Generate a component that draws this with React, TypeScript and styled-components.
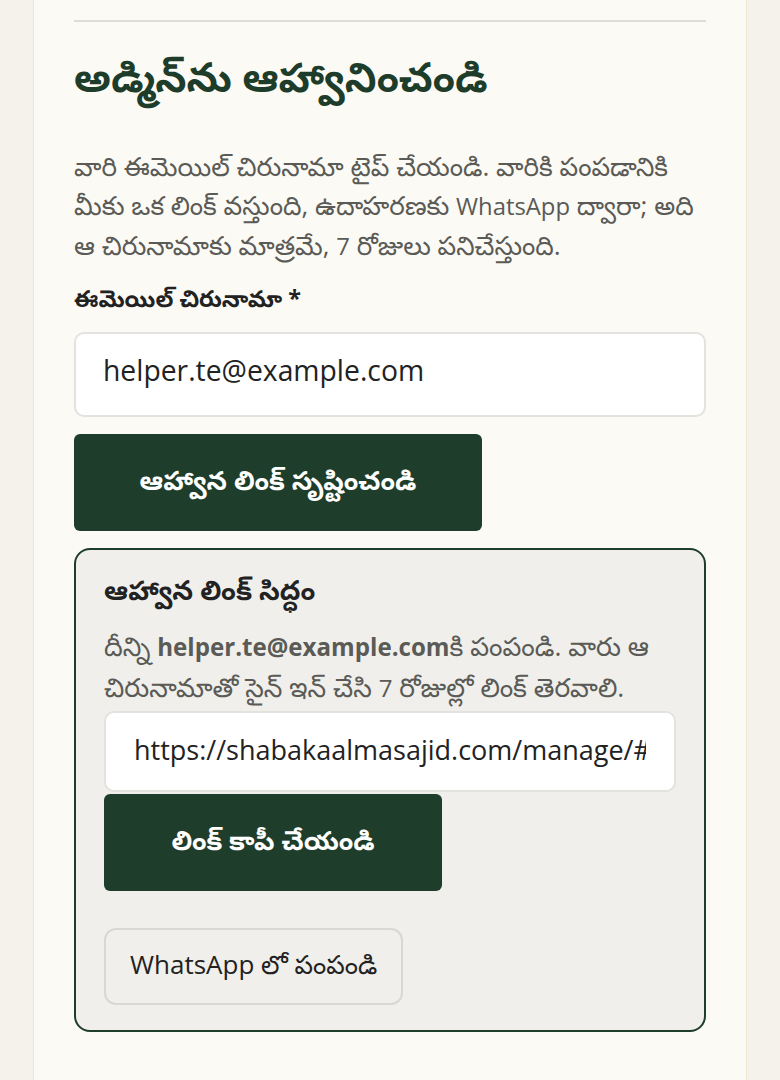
import * as React from 'react';
import styled, { createGlobalStyle } from 'styled-components';

const GlobalStyle = createGlobalStyle`
  html, body {
    margin: 0;
    padding: 0;
    background: #f5f2eb;
  }
  body {
    font-family: "Open Sans", "Noto Sans", "Noto Sans Telugu", sans-serif;
    color: #222;
  }
`;

const Page = styled.div`
  padding: 0 33px;
  min-height: 1080px;
  display: flex;
  justify-content: center;
`;

const Card = styled.main`
  width: 100%;
  max-width: 714px;
  box-sizing: border-box;
  background: #fcfaf5;
  border-left: 1px solid #efe5d2;
  border-right: 1px solid #efe5d2;
  padding: 20px 40px 48px;
`;

const Divider = styled.hr`
  margin: 0;
  border: 0;
  border-top: 2px solid #e0ddd6;
`;

/* Latin runs sit a little smaller than the Telugu around them */
const Latin = styled.span`
  font-size: 0.91em;
`;

const Title = styled.h1`
  margin: 28px 0 0;
  font-size: 40.5px;
  line-height: 54px;
  font-weight: 700;
  color: #1d3d2a;
`;

const Lead = styled.p`
  margin: 43px 0 0;
  font-size: 26.2px;
  line-height: 39px;
  color: #5a5a56;
`;

const Label = styled.label`
  display: block;
  margin-top: 15px;
  font-size: 23.3px;
  line-height: 34px;
  font-weight: 700;
  color: #222;
`;

const TextField = styled.input<{ $compact?: boolean }>`
  display: block;
  width: 100%;
  box-sizing: border-box;
  height: ${(p) => (p.$compact ? '81px' : '85px')};
  margin-top: ${(p) => (p.$compact ? '3px' : '17px')};
  padding: ${(p) => (p.$compact ? '0 28px 4px 28px' : '0 27px 9px')};
  border: 2px solid #e4e2de;
  border-radius: 10px;
  background: #fff;
  font-family: inherit;
  font-size: ${(p) => (p.$compact ? '27px' : '28.3px')};
  color: #222;
  outline: none;
`;

const PrimaryButton = styled.button<{ $width: number }>`
  display: flex;
  align-items: center;
  justify-content: center;
  width: ${(p) => p.$width}px;
  height: 97px;
  border: 0;
  border-radius: 6px;
  background: #1e3d2b;
  color: #fff;
  font-family: inherit;
  font-size: 26.5px;
  font-weight: 700;
  cursor: pointer;
`;

const CreateButton = styled(PrimaryButton)`
  margin-top: 17px;
`;

const ResultBox = styled.section`
  margin-top: 17px;
  border: 2px solid #1e3d2b;
  border-radius: 16px;
  background: #f0efeb;
  padding: 18px 28px 25px;
`;

const ResultTitle = styled.h2`
  margin: 0;
  font-size: 27px;
  line-height: 44px;
  font-weight: 700;
  color: #222;
`;

const ResultText = styled.p`
  margin: 14px 0 0;
  font-size: 26.5px;
  line-height: 41px;
  color: #5a5a56;

  strong {
    font-weight: 700;
  }
`;

const Actions = styled.div`
  display: flex;
  flex-direction: column;
  align-items: flex-start;
  gap: 37px;
  margin-top: 2px;
`;

const GhostButton = styled.button`
  height: 77px;
  padding: 0 24px;
  border: 2px solid #d8d7d3;
  border-radius: 12px;
  background: transparent;
  font-family: inherit;
  font-size: 26px;
  color: #222;
  cursor: pointer;
`;

export default function App() {
  const email = 'helper.te@example.com';
  return (
    <>
      <GlobalStyle />
      <Page>
        <Card>
          <Divider />
          <Title>అడ్మిన్‌ను ఆహ్వానించండి</Title>
          <Lead>
            వారి ఈమెయిల్ చిరునామా టైప్ చేయండి. వారికి పంపడానికి మీకు ఒక లింక్ వస్తుంది, ఉదాహరణకు{' '}
            <Latin>WhatsApp</Latin> ద్వారా; అది ఆ చిరునామాకు మాత్రమే, <Latin>7</Latin> రోజులు పనిచేస్తుంది.
          </Lead>
          <Label htmlFor="invite-email">ఈమెయిల్ చిరునామా *</Label>
          <TextField id="invite-email" type="email" defaultValue={email} />
          <CreateButton $width={408}>ఆహ్వాన లింక్ సృష్టించండి</CreateButton>
          <ResultBox>
            <ResultTitle>ఆహ్వాన లింక్ సిద్ధం</ResultTitle>
            <ResultText>
              దీన్ని{' '}
              <Latin>
                <strong>{email}</strong>
              </Latin>
              కి పంపండి. వారు ఆ చిరునామాతో సైన్ ఇన్ చేసి <Latin>7</Latin> రోజుల్లో లింక్ తెరవాలి.
            </ResultText>
            <TextField
              $compact
              readOnly
              value="https://shabakaalmasajid.com/manage/#invite=7f3a9c2e41b8"
            />
            <Actions>
              <PrimaryButton $width={338}>లింక్ కాపీ చేయండి</PrimaryButton>
              <GhostButton>WhatsApp లో పంపండి</GhostButton>
            </Actions>
          </ResultBox>
        </Card>
      </Page>
    </>
  );
}
